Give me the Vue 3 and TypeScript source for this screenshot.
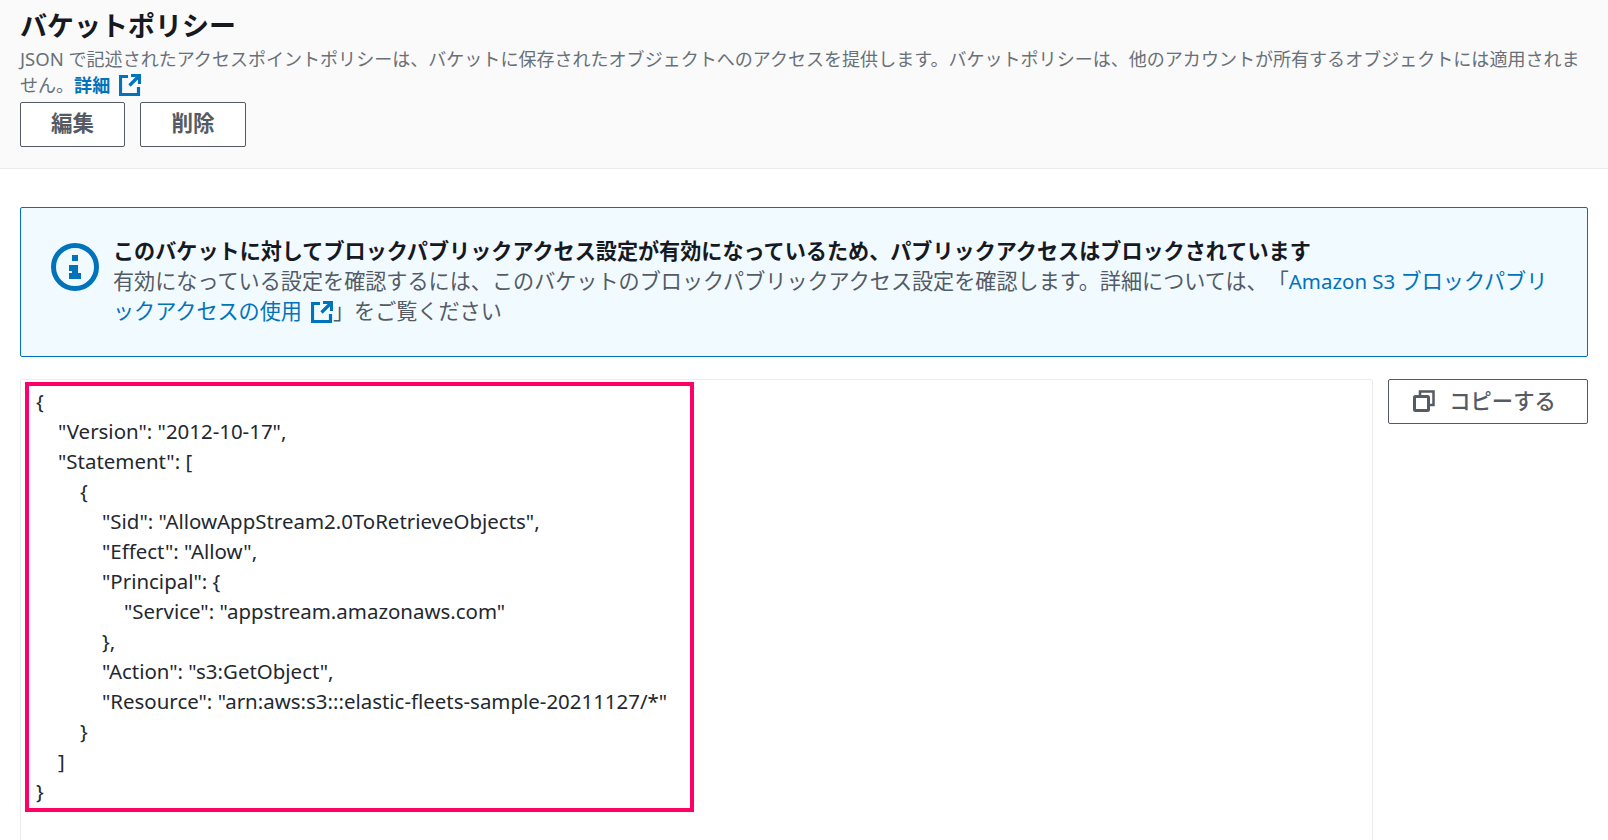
<script setup lang="ts">
const codeLines: { indent: number; text: string }[] = [
  { indent: 0, text: '{' },
  { indent: 1, text: '"Version": "2012-10-17",' },
  { indent: 1, text: '"Statement": [' },
  { indent: 2, text: '{' },
  { indent: 3, text: '"Sid": "AllowAppStream2.0ToRetrieveObjects",' },
  { indent: 3, text: '"Effect": "Allow",' },
  { indent: 3, text: '"Principal": {' },
  { indent: 4, text: '"Service": "appstream.amazonaws.com"' },
  { indent: 3, text: '},' },
  { indent: 3, text: '"Action": "s3:GetObject",' },
  { indent: 3, text: '"Resource": "arn:aws:s3:::elastic-fleets-sample-20211127/*"' },
  { indent: 2, text: '}' },
  { indent: 1, text: ']' },
  { indent: 0, text: '}' }
]
</script>

<template>
  <div class="page">
    <header class="head">
      <h2 class="title">バケットポリシー</h2>
      <p class="desc">
        <span class="lat-sm">JSON </span>で記述されたアクセスポイントポリシーは、バケットに保存されたオブジェクトへのアクセスを提供します。バケットポリシーは、他のアカウントが所有するオブジェクトには適用されません。<a class="link strong">詳細<svg class="ext" viewBox="0 0 22 22"><path d="M9 2.500H1.500v18h18V13M12 1.500h8.500V10M20 2l-9.500 9.500" fill="none" stroke="currentColor" stroke-width="3.200" /></svg></a>
      </p>
      <div class="actions">
        <button class="btn">編集</button>
        <button class="btn wide">削除</button>
      </div>
    </header>

    <main class="body">
      <section class="alert">
        <svg class="info" viewBox="0 0 48 48">
          <circle cx="24" cy="24" r="21.500" fill="none" stroke="#0073bb" stroke-width="5" />
          <rect x="21" y="12" width="6" height="6" fill="#0073bb" />
          <path d="M18 22h9v8h3v6H18v-6h3v-2h-3z" fill="#0073bb" />
        </svg>
        <div class="alert-text">
          <div class="alert-title">このバケットに対してブロックパブリックアクセス設定が有効になっているため、パブリックアクセスはブロックされています</div>
          <div>有効になっている設定を確認するには、このバケットのブロックパブリックアクセス設定を確認します。詳細については、「<a class="link"><span class="lat">Amazon S3 </span>ブロックパブリックアクセスの使用<svg class="ext" viewBox="0 0 22 22"><path d="M9 2.500H1.500v18h18V13M12 1.500h8.500V10M20 2l-9.500 9.500" fill="none" stroke="currentColor" stroke-width="3.200" /></svg></a>」をご覧ください</div>
        </div>
      </section>

      <section class="policy">
        <div class="code-box">
          <div class="highlight">
            <div v-for="(line, i) in codeLines" :key="i" class="code-line" :style="{ paddingLeft: line.indent * 22 + 'px' }">{{ line.text }}</div>
          </div>
        </div>
        <button class="btn copy">
          <svg class="copy-icon" viewBox="0 0 22 22">
            <rect x="1.500" y="6.500" width="14" height="14" rx="1" fill="none" stroke="currentColor" stroke-width="3" />
            <path d="M7 5V1.500h13.500V15H17" fill="none" stroke="currentColor" stroke-width="2.500" />
          </svg>
          <span>コピーする</span>
        </button>
      </section>
    </main>
  </div>
</template>

<style>
html, body { margin: 0; background: #fff; overflow: hidden; }
</style>

<style scoped>
.page {
  width: 1608px;
  height: 840px;
  overflow: hidden;
  font-family: "Noto Sans", "Noto Sans CJK JP", sans-serif;
  color: #16191f;
  text-spacing-trim: space-all;
  line-break: anywhere;
}
.head {
  box-sizing: border-box;
  height: 169px;
  padding: 8px 20px 0;
  background: #fafafa;
  border-bottom: 1px solid #eaeded;
}
.title {
  margin: 0;
  font-size: 27px;
  line-height: 36px;
  font-weight: 700;
}
.desc {
  margin: 2px 0 0;
  font-size: 18.050px;
  line-height: 25.500px;
  color: #687078;
}
.lat-sm { font-size: 18.500px; }
.lat { font-size: 20.450px; }
.link { color: #0073bb; }
.strong { font-weight: 700; }
.ext {
  width: 22px;
  height: 22px;
  margin-left: 9px;
  vertical-align: -4px;
}
.actions {
  display: flex;
  gap: 15px;
  margin-top: 4px;
}
.btn {
  box-sizing: border-box;
  width: 105px;
  height: 45px;
  padding: 0 0 4px;
  background: #fff;
  border: 1px solid #545b64;
  border-radius: 2px;
  color: #545b64;
  font: 700 21.500px/28px "Noto Sans", "Noto Sans CJK JP", sans-serif;
}
.wide { width: 106px; }
.body { padding: 38px 20px 0; }
.alert {
  box-sizing: border-box;
  height: 150px;
  display: flex;
  gap: 14px;
  padding: 27.500px 34px 0 30px;
  background: #f1faff;
  border: 1px solid #0073bb;
  border-radius: 2px;
}
.info {
  flex: none;
  width: 48px;
  height: 48px;
  margin-top: 7.500px;
}
.alert-text {
  font-size: 21.120px;
  line-height: 30px;
  color: #545b64;
}
.alert-title {
  font-weight: 700;
  color: #16191f;
}
.policy {
  display: flex;
  gap: 15px;
  margin-top: 22px;
  align-items: flex-start;
}
.code-box {
  box-sizing: border-box;
  flex: none;
  width: 1353px;
  height: 500px;
  padding: 2px 4px;
  border: 1px solid #eaeded;
  border-radius: 2px;
}
.highlight {
  box-sizing: border-box;
  width: 669px;
  height: 430px;
  padding: 0 0 0 7px;
  border: 4px solid #ff0066;
}
.code-line {
  font-size: 20.450px;
  line-height: 30px;
  color: #232830;
  white-space: pre;
}
.copy {
  width: 200px;
  height: 45px;
  display: flex;
  align-items: center;
  justify-content: center;
  gap: 14px;
  padding: 0 7px 2px 0;
  font-size: 21.300px;
  font-weight: 500;
}
.copy-icon {
  width: 22px;
  height: 22px;
}
</style>
